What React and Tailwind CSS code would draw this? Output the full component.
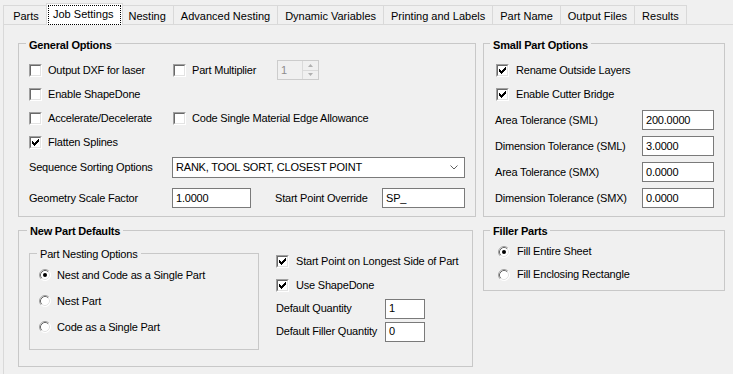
import React from "react";

const tabs = [
  "Parts",
  "Job Settings",
  "Nesting",
  "Advanced Nesting",
  "Dynamic Variables",
  "Printing and Labels",
  "Part Name",
  "Output Files",
  "Results",
];

/* classic 7x7 check mark, drawn column by column */
const checkCols = [2, 3, 4, 3, 2, 1, 0];

function Check({ checked }) {
  return (
    <span className="w-[13px] h-[13px] shrink-0 flex border border-t-[#a0a0a0] border-l-[#a0a0a0] border-r-white border-b-white">
      <span className="flex-1 flex items-center justify-center bg-white border border-t-[#696969] border-l-[#696969] border-r-[#e3e3e3] border-b-[#e3e3e3]">
        {checked && (
          <svg width="7" height="7" viewBox="0 0 7 7">
            {checkCols.map((y, x) => (
              <rect key={x} x={x} y={y} width="1" height="3" fill="#000" />
            ))}
          </svg>
        )}
      </span>
    </span>
  );
}

function Radio({ checked }) {
  return (
    <svg width="12" height="12" viewBox="0 0 12 12" className="shrink-0">
      <circle cx="6" cy="6" r="5.5" fill="#fff" />
      <path d="M2.11 9.89 A5.5 5.5 0 0 1 9.89 2.11" stroke="#a0a0a0" fill="none" />
      <path d="M9.89 2.11 A5.5 5.5 0 0 1 2.11 9.89" stroke="#ffffff" fill="none" />
      <path d="M2.82 9.18 A4.5 4.5 0 0 1 9.18 2.82" stroke="#696969" fill="none" />
      <path d="M9.18 2.82 A4.5 4.5 0 0 1 2.82 9.18" stroke="#e3e3e3" fill="none" />
      {checked && <circle cx="6" cy="6" r="2" fill="#000" />}
    </svg>
  );
}

function CheckRow({ checked, label, className = "" }) {
  return (
    <div className={"flex items-center gap-[6px] " + className}>
      <Check checked={checked} />
      <span className="whitespace-nowrap">{label}</span>
    </div>
  );
}

function TextBox({ value, className = "" }) {
  return (
    <div
      className={
        "h-[20px] flex items-center bg-white border border-[#7a7a7a] pl-[3px] whitespace-nowrap " +
        className
      }
    >
      {value}
    </div>
  );
}

function Spinner() {
  return (
    <div className="w-[42px] h-[20px] flex border border-[#cccccc] bg-[#f0f0f0]">
      <span className="flex-1 pl-[3px] flex items-center text-[#8d8d8d]">1</span>
      <div className="w-[16px] flex flex-col">
        <div className="flex-1 flex items-center justify-center border-l border-b border-[#dadada]">
          <svg width="5" height="3" viewBox="0 0 5 3">
            <path d="M0 3 L2.5 0 L5 3 Z" fill="#b0b0b0" />
          </svg>
        </div>
        <div className="flex-1 flex items-center justify-center border-l border-[#dadada]">
          <svg width="5" height="3" viewBox="0 0 5 3">
            <path d="M0 0 L2.5 3 L5 0 Z" fill="#b0b0b0" />
          </svg>
        </div>
      </div>
    </div>
  );
}

function Combo() {
  return (
    <div className="w-[293px] h-[21px] flex items-center justify-between bg-white border border-[#7a7a7a] pl-[3px] pr-[6px]">
      <span className="whitespace-nowrap">RANK, TOOL SORT, CLOSEST POINT</span>
      <svg width="8" height="5" viewBox="0 0 8 5">
        <path d="M0.5 0.5 L4 4 L7.5 0.5" stroke="#606060" fill="none" />
      </svg>
    </div>
  );
}

export default function App() {
  return (
    <div className="w-[733px] h-[374px] overflow-hidden bg-[#f0f0f0] font-['Liberation_Sans',Arial,sans-serif] text-[11px] leading-[13px] text-black">
      {/* Tab strip */}
      <div className="h-[24px] flex items-end pl-[3px] relative z-10">
        {tabs.map((t, i) =>
          t === "Job Settings" ? (
            <div
              key={t}
              className="-mx-[2px] -mb-px h-[22px] relative z-10 bg-white border-x border-t border-[#d9d9d9] pt-[1px] px-[1px]"
            >
              <div className="h-full border border-dotted border-black pl-[4px] pr-[6px] pt-[2px] whitespace-nowrap">
                {t}
              </div>
            </div>
          ) : (
            <div
              key={t}
              className={
                "h-[19px] border-l border-t border-[#d9d9d9] px-[7px] pt-[4px] whitespace-nowrap " +
                (i === 0 ? "min-w-[45px] text-center " : "") +
                (i === tabs.length - 1 ? "border-r" : "")
              }
            >
              {t}
            </div>
          )
        )}
      </div>

      {/* Tab page */}
      <div className="ml-[3px] h-[350px] border-l border-t border-[#d9d9d9] pl-[14px] pt-[18px] flex items-start gap-[7px] tracking-[-0.2px]">
        {/* Left column */}
        <div className="w-[458px] flex flex-col">
          {/* General Options */}
          <div className="border border-[#c8c8c8] flex flex-col pl-[10px] pb-[8px]">
            <div className="-mt-[5px] -ml-[3px] px-[3px] self-start bg-[#f0f0f0] font-bold">
              General Options
            </div>
            <div className="mt-[6px] h-[24px] flex items-center">
              <CheckRow label="Output DXF for laser" className="w-[144px]" />
              <CheckRow label="Part Multiplier" className="w-[104px]" />
              <Spinner />
            </div>
            <div className="h-[24px] flex items-center">
              <CheckRow label="Enable ShapeDone" />
            </div>
            <div className="h-[24px] flex items-center">
              <CheckRow label="Accelerate/Decelerate" className="w-[144px]" />
              <CheckRow label="Code Single Material Edge Allowance" />
            </div>
            <div className="h-[24px] flex items-center">
              <CheckRow checked label="Flatten Splines" />
            </div>
            <div className="mt-[3px] h-[21px] flex items-center">
              <span className="w-[143px]">Sequence Sorting Options</span>
              <Combo />
            </div>
            <div className="mt-[10px] h-[20px] flex items-center">
              <span className="w-[143px]">Geometry Scale Factor</span>
              <TextBox value="1.0000" className="w-[79px]" />
              <span className="ml-[24px] w-[107px]">Start Point Override</span>
              <TextBox value="SP_" className="w-[83px]" />
            </div>
          </div>

          {/* New Part Defaults */}
          <div className="mt-[13px] w-[455px] border border-[#c8c8c8] flex flex-col pb-[16px]">
            <div className="-mt-[6px] ml-[8px] px-[3px] self-start bg-[#f0f0f0] font-bold">
              New Part Defaults
            </div>
            <div className="mt-[11px] pl-[10px] flex items-start">
              <div className="mt-[4px] w-[230px] border border-[#c8c8c8] flex flex-col pb-[9px]">
                <div className="-mt-[6px] ml-[7px] px-[3px] self-start bg-[#f0f0f0]">
                  Part Nesting Options
                </div>
                <div className="mt-[1px] pl-[9px] flex flex-col">
                  <div className="h-[26px] flex items-center gap-[6px]">
                    <Radio checked />
                    <span>Nest and Code as a Single Part</span>
                  </div>
                  <div className="h-[26px] flex items-center gap-[6px]">
                    <Radio />
                    <span>Nest Part</span>
                  </div>
                  <div className="h-[26px] flex items-center gap-[6px]">
                    <Radio />
                    <span>Code as a Single Part</span>
                  </div>
                </div>
              </div>
              <div className="ml-[17px] flex flex-col">
                <div className="h-[24px] flex items-center">
                  <CheckRow checked label="Start Point on Longest Side of Part" className="gap-[7px]" />
                </div>
                <div className="h-[24px] flex items-center">
                  <CheckRow checked label="Use ShapeDone" className="gap-[7px]" />
                </div>
                <div className="h-[23px] flex items-center">
                  <span className="w-[109px]">Default Quantity</span>
                  <TextBox value="1" className="w-[40px]" />
                </div>
                <div className="h-[23px] flex items-center">
                  <span className="w-[109px]">Default Filler Quantity</span>
                  <TextBox value="0" className="w-[40px]" />
                </div>
              </div>
            </div>
          </div>
        </div>

        {/* Right column */}
        <div className="w-[242px] flex flex-col">
          {/* Small Part Options */}
          <div className="border border-[#c8c8c8] flex flex-col pl-[12px] pb-[5px]">
            <div className="-mt-[5px] -ml-[6px] px-[3px] self-start bg-[#f0f0f0] font-bold">
              Small Part Options
            </div>
            <div className="mt-[6px] h-[24px] flex items-center">
              <CheckRow checked label="Rename Outside Layers" className="gap-[7px]" />
            </div>
            <div className="h-[24px] flex items-center">
              <CheckRow checked label="Enable Cutter Bridge" className="gap-[7px]" />
            </div>
            <div className="mt-[1px] flex flex-col">
              {[
                ["Area Tolerance (SML)", "200.0000"],
                ["Dimension Tolerance (SML)", "3.0000"],
                ["Area Tolerance (SMX)", "0.0000"],
                ["Dimension Tolerance (SMX)", "0.0000"],
              ].map(([label, value]) => (
                <div key={label} className="h-[26px] flex items-center">
                  <span className="w-[146px] -ml-px">{label}</span>
                  <TextBox value={value} className="w-[72px] ml-px" />
                </div>
              ))}
            </div>
          </div>

          {/* Filler Parts */}
          <div className="mt-[13px] border border-[#c8c8c8] flex flex-col pl-[14px] pb-[4px]">
            <div className="-mt-[6px] -ml-[8px] px-[3px] self-start bg-[#f0f0f0] font-bold">
              Filler Parts
            </div>
            <div className="mt-[2px] h-[23px] flex items-center gap-[7px]">
              <Radio checked />
              <span>Fill Entire Sheet</span>
            </div>
            <div className="h-[23px] flex items-center gap-[7px]">
              <Radio />
              <span>Fill Enclosing Rectangle</span>
            </div>
          </div>
        </div>
      </div>
    </div>
  );
}
